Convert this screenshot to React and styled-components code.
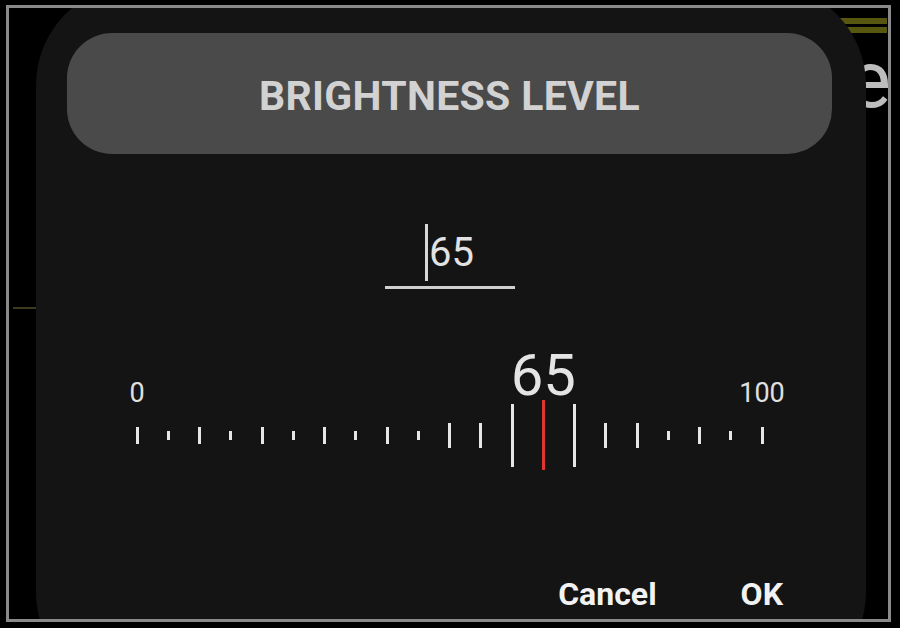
import React from "react"
import styled, { createGlobalStyle } from "styled-components"

const GlobalStyle = createGlobalStyle`
  html, body {
    margin: 0;
    padding: 0;
    background: #000;
  }
  body {
    font-family: Roboto, "Noto Sans", sans-serif;
  }
`

// step of 5 units between ticks, 0..100
const TICKS = [
  17, 9, 17, 9, 17, 9, 17, 9, 17, 9,
  25, 25, 63, 70, 63, 25, 25, 9, 17, 9, 17,
]
const VALUE = 65
const SELECTED = VALUE / 5

const App = () => (
  <>
    <GlobalStyle />
    <Frame>
      <Backdrop>
        <MenuBars>
          <Bar />
          <Bar />
        </MenuBars>
        <HeaderText>e</HeaderText>
        <Divider />
      </Backdrop>

      <Dialog>
        <TitlePill>
          <Title>BRIGHTNESS LEVEL</Title>
        </TitlePill>

        <Field>
          <Caret />
          <FieldValue>{VALUE}</FieldValue>
        </Field>

        <Ruler>
          <LabelSlot $col={1}>
            <ScaleLabel>0</ScaleLabel>
          </LabelSlot>
          <LabelSlot $col={SELECTED + 1}>
            <ValueLabel>{VALUE}</ValueLabel>
          </LabelSlot>
          <LabelSlot $col={21}>
            <ScaleLabel>100</ScaleLabel>
          </LabelSlot>
          {TICKS.map((h, i) => (
            <TickSlot key={i} $col={i + 1}>
              <Tick $h={h} $active={i === SELECTED} />
            </TickSlot>
          ))}
        </Ruler>

        <Actions>
          <ActionButton>Cancel</ActionButton>
          <ActionButton>OK</ActionButton>
        </Actions>
      </Dialog>
    </Frame>
  </>
)

export default App

const Frame = styled.div`
  position: relative;
  box-sizing: border-box;
  width: 885px;
  height: 617px;
  margin: 5px 0 0 6px;
  border: 3px solid #8a8a8a;
  background: #000;
  overflow: hidden;
`

const Backdrop = styled.div`
  display: flex;
  flex-direction: column;
  align-items: flex-end;
  padding-top: 10px;
`

const MenuBars = styled.div`
  display: flex;
  flex-direction: column;
  gap: 3px;
  width: 60px;
  margin-right: 1px;
`

const Bar = styled.span`
  display: block;
  height: 6px;
  background: #58570f;
`

const HeaderText = styled.span`
  margin-top: 7px;
  margin-right: -3px;
  font-size: 80px;
  line-height: 80px;
  color: #bdbdbd;
`

const Divider = styled.span`
  align-self: flex-start;
  width: 40px;
  height: 2px;
  margin: 187px 0 0 4px;
  background: #3a3b1e;
`

const Dialog = styled.div`
  position: absolute;
  left: 27px;
  top: -23px;
  box-sizing: border-box;
  width: 830px;
  height: 707px;
  padding: 48px 34px 0 31px;
  border-radius: 100px;
  background: #141414;
  display: flex;
  flex-direction: column;
  align-items: center;
`

const TitlePill = styled.div`
  align-self: stretch;
  box-sizing: border-box;
  height: 121px;
  padding-top: 4px;
  border-radius: 45px;
  background: #4a4a4a;
  display: flex;
  align-items: center;
  justify-content: center;
`

const Title = styled.h2`
  margin: 0;
  font-size: 41px;
  font-weight: 700;
  letter-spacing: 0.3px;
  color: #d2d2d2;
`

const Field = styled.div`
  box-sizing: border-box;
  width: 130px;
  height: 65px;
  margin-top: 70px;
  padding-bottom: 5px;
  border-bottom: 3px solid #d0d0d0;
  display: flex;
  align-items: center;
  justify-content: center;
  gap: 1px;
`

const Caret = styled.span`
  width: 3px;
  height: 57px;
  background: #d8d8d8;
`

const FieldValue = styled.span`
  font-size: 40px;
  line-height: 57px;
  color: #e2e2e2;
`

const Ruler = styled.div`
  display: grid;
  grid-template-columns: repeat(21, 31.25px);
  grid-template-rows: 61px 40px;
  row-gap: 8px;
  margin-top: 57px;
`

const LabelSlot = styled.div`
  grid-row: 1;
  grid-column: ${p => p.$col};
  display: flex;
  justify-content: center;
  align-items: flex-end;
`

const ScaleLabel = styled.span`
  font-size: 27px;
  line-height: 27px;
  color: #e0e0e0;
  white-space: nowrap;
`

const ValueLabel = styled.span`
  margin-bottom: 3px;
  font-size: 58px;
  line-height: 58px;
  color: #e4e4e4;
  white-space: nowrap;
`

const TickSlot = styled.div`
  grid-row: 2;
  grid-column: ${p => p.$col};
  display: flex;
  justify-content: center;
  align-items: center;
`

const Tick = styled.span`
  flex: none;
  width: 3px;
  height: ${p => p.$h}px;
  background: ${p => (p.$active ? "#e0362f" : "#e6e6e6")};
`

const Actions = styled.div`
  align-self: stretch;
  display: flex;
  justify-content: flex-end;
  gap: 84px;
  margin-top: 119px;
  padding-right: 49px;
`

const ActionButton = styled.button`
  padding: 0;
  border: none;
  background: none;
  font-family: Roboto, "Noto Sans", sans-serif;
  font-size: 32px;
  font-weight: 700;
  line-height: 40px;
  color: #f2f2f2;
`
